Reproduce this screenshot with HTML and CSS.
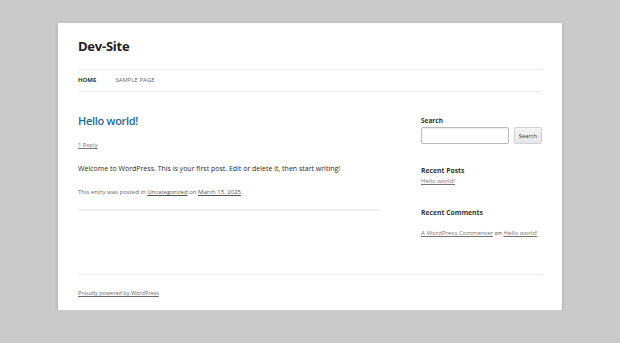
FILE: index.html
```html
<!DOCTYPE html>
<html lang="en">
<head>
<meta charset="utf-8">
<title>Dev-Site</title>
<link rel="stylesheet" href="styles.css">
</head>
<body>
<div class="site">
  <header class="site-header">
    <h1 class="site-title"><a href="#">Dev-Site</a></h1>
    <nav class="main-nav">
      <a href="#" class="current">HOME</a>
      <a href="#">SAMPLE PAGE</a>
    </nav>
  </header>
  <div class="main-area">
    <div class="content">
      <article class="post">
        <h2 class="entry-title"><a href="#">Hello world!</a></h2>
        <div class="comments-link"><a href="#">1 Reply</a></div>
        <p class="entry-content">Welcome to WordPress. This is your first post. Edit or delete it, then start writing!</p>
        <div class="entry-meta">This entry was posted in <a href="#">Uncategorized</a> on <a href="#">March 15, 2025</a>.</div>
      </article>
    </div>
    <aside class="sidebar">
      <div class="widget-search">
        <label class="widget-label">Search</label>
        <div class="search-row">
          <input class="search-input" type="text">
          <button class="search-btn">Search</button>
        </div>
      </div>
      <h3 class="widget-title">Recent Posts</h3>
      <div class="widget-line"><a href="#">Hello world!</a></div>
      <h3 class="widget-title second">Recent Comments</h3>
      <div class="widget-line comments"><a href="#">A WordPress Commenter</a> on <a href="#">Hello world!</a></div>
    </aside>
  </div>
  <footer class="site-footer">
    <a href="#">Proudly powered by WordPress</a>
  </footer>
</div>
</body>
</html>
```
FILE: styles.css
```css
html, body {
  margin: 0;
  padding: 0;
}
body {
  background: #cacaca;
  font-family: "Open Sans", "Liberation Sans", sans-serif;
  color: #444;
}
.site {
  width: 464px;
  margin: 23px auto 0;
  padding: 0 20px;
  background: #fff;
  box-shadow: 0 1px 3px rgba(80, 80, 80, 0.35);
}
.site-header {
  padding-top: 13px;
}
.site-title {
  margin: 0;
  font-size: 13px;
  line-height: 20px;
  font-weight: 700;
  letter-spacing: -0.25px;
}
.site-title a {
  color: #222;
  text-decoration: none;
}
.main-nav {
  margin-top: 13px;
  border-top: 1px solid #ededed;
  border-bottom: 1px solid #ededed;
  display: flex;
  gap: 19px;
  height: 21px;
  align-items: center;
}
.main-nav a {
  font-size: 6px;
  line-height: 21px;
  color: #6a6a6a;
  text-decoration: none;
}
.main-nav a.current {
  color: #333;
  font-weight: 700;
}
.main-area {
  display: flex;
  justify-content: space-between;
  padding-top: 22px;
}
.content {
  width: 302px;
}
.post {
  padding-bottom: 12px;
  border-bottom: 2px solid #efefef;
}
.entry-title {
  margin: 0;
  font-size: 11px;
  line-height: 14px;
  font-weight: 600;
  letter-spacing: -0.3px;
}
.entry-title a {
  color: #1d6a93;
  text-decoration: none;
}
.comments-link {
  margin-top: 12px;
  font-size: 5.8px;
  line-height: 10px;
}
.comments-link a {
  color: #777;
}
.entry-content {
  margin: 13px 0 0;
  font-size: 7px;
  line-height: 12px;
  color: #2b2b2b;
}
.entry-meta {
  margin-top: 12px;
  font-size: 6px;
  line-height: 10px;
  color: #666;
}
.entry-meta a {
  color: #555;
}
.sidebar {
  width: 121px;
}
.widget-search {
  padding-top: 3px;
}
.widget-label {
  display: block;
  font-size: 6.5px;
  line-height: 8px;
  font-weight: 700;
  color: #333;
}
.search-row {
  display: flex;
  gap: 5px;
  margin-top: 2px;
}
.search-input {
  box-sizing: border-box;
  width: 88px;
  height: 17px;
  margin: 0;
  padding: 0 3px;
  border: 1px solid #bbb;
  border-radius: 2px;
  background: #fff;
  box-shadow: inset 0 1px 2px rgba(0, 0, 0, 0.07);
}
.search-btn {
  box-sizing: border-box;
  width: 29px;
  height: 17px;
  margin: 0;
  padding: 0;
  border: 1px solid #d2d2d2;
  border-radius: 2px;
  background: linear-gradient(#f4f4f4, #e6e6e6);
  font-family: "Open Sans", "Liberation Sans", sans-serif;
  font-size: 5.8px;
  color: #333;
}
.widget-title {
  margin: 23px 0 0;
  font-size: 6.8px;
  line-height: 8px;
  font-weight: 700;
  color: #333;
}
.widget-title.second {
  margin-top: 24px;
}
.widget-line {
  margin-top: 1px;
  font-size: 6.1px;
  line-height: 9px;
  color: #444;
}
.widget-line a {
  color: #757575;
}
.widget-line.comments {
  margin-top: 11px;
}
.site-footer {
  margin-top: 37px;
  border-top: 1px solid #ededed;
  padding: 13px 0 12px;
  font-size: 5.5px;
  line-height: 10px;
}
.site-footer a {
  color: #686868;
}
```
